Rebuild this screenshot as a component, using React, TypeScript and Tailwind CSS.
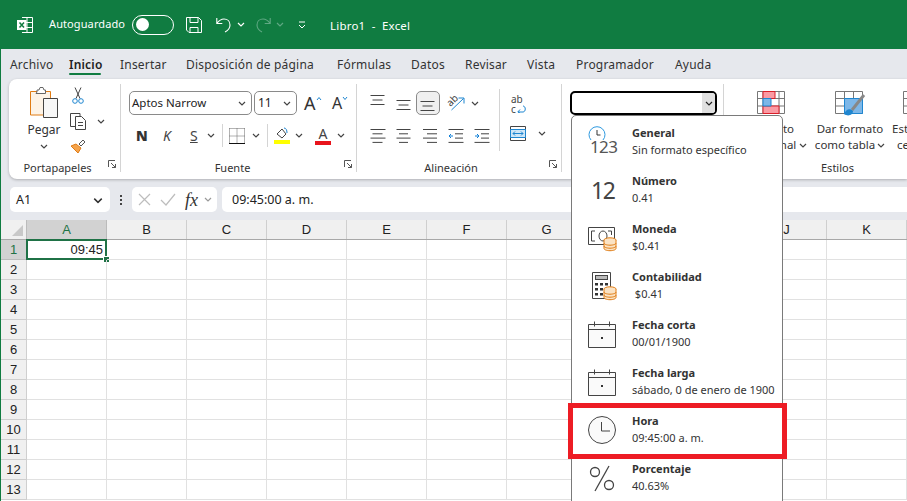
const font = "[font-family:'Noto_Sans',sans-serif]"

const tabs = [
  { name: "Archivo", w: "w-[59px]" },
  { name: "Inicio", w: "w-[51px]" },
  { name: "Insertar", w: "w-[66px]" },
  { name: "Disposición de página", w: "w-[151px]" },
  { name: "Fórmulas", w: "w-[74px]" },
  { name: "Datos", w: "w-[54px]" },
  { name: "Revisar", w: "w-[62px]" },
  { name: "Vista", w: "w-[49px]" },
  { name: "Programador", w: "w-[99px]" },
  { name: "Ayuda", w: "w-[50px]" },
]
const cols = ["A", "B", "C", "D", "E", "F", "G", "H", "I", "J", "K"]
const rows = [1, 2, 3, 4, 5, 6, 7, 8, 9, 10, 11, 12, 13]

function Chevron({ className = "", color = "#444" }: { className?: string; color?: string }) {
  return (
    <svg width="8" height="5" viewBox="0 0 8 5" className={`shrink-0 ${className}`} fill="none">
      <path d="M1 1l3 3 3-3" stroke={color} strokeWidth="1.2" />
    </svg>
  )
}

function Launcher() {
  return (
    <svg width="8" height="8" viewBox="0 0 8 8" fill="none" stroke="#555" strokeWidth="1">
      <path d="M.5 7V.5H7M3 3l4.5 4.5M7.5 4v3.5H4" />
    </svg>
  )
}

function Lines({ widths, top = 1.5, step = 4.3, blue }: { widths: number[]; top?: number; step?: number; blue?: "in" | "out" }) {
  return (
    <svg width="16" height="16" viewBox="0 0 16 16" fill="none" stroke="#444">
      {widths.map((w, i) => {
        const x = w < 0 ? 15 + w : w === 15 ? 0.5 : (15 - w) / 2
        return <path key={i} d={`M${x} ${top + i * step}h${Math.abs(w)}`} />
      })}
      {blue === "in" && <path d="M5 8H1M3 6L1 8l2 2" stroke="#0f7fd6" />}
      {blue === "out" && <path d="M1 8h4M3 6l2 2-2 2" stroke="#0f7fd6" />}
    </svg>
  )
}

function Coins() {
  return (
    <g fill="#fbe3c4" stroke="#e07c14">
      <ellipse cx="22" cy="16" rx="6" ry="2.2" />
      <path d="M16 16v8.5c0 1.2 2.7 2.2 6 2.2s6-1 6-2.2V16M16 19c0 1.2 2.7 2.2 6 2.2s6-1 6-2.2M16 22c0 1.2 2.7 2.2 6 2.2s6-1 6-2.2" />
    </g>
  )
}

function CalendarIcon() {
  return (
    <svg width="28" height="28" viewBox="0 0 28 28" fill="none" stroke="#444">
      <path d="M.5 4.500h27v23H.5zM.5 9.500h27M6.500 1.500v5M21.500 1.500v5" fill="#fafafa" />
      <rect x="13" y="17" width="2" height="2" fill="#333" stroke="none" />
    </svg>
  )
}

const formats = [
  {
    title: "General",
    sub: "Sin formato específico",
    icon: (
      <div className="relative w-[30px] h-[32px]">
        <svg width="18" height="18" viewBox="0 0 18 18" fill="none" className="absolute left-0 top-0">
          <path d="M3 14A8 8 0 1 1 15 14" stroke="#2f9ae0" strokeWidth="1" />
          <path d="M9 4v5h3.500" stroke="#333" />
        </svg>
        <span className="absolute left-[2px] top-[11px] text-[17px] leading-[20px] tracking-[-0.6px] text-[#555]">123</span>
      </div>
    ),
  },
  {
    title: "Número",
    sub: "0.41",
    icon: <span className="text-[23px] leading-[30px] text-[#444] pl-[3px] tracking-[-1.5px]">12</span>,
  },
  {
    title: "Moneda",
    sub: "$0.41",
    icon: (
      <svg width="30" height="28" viewBox="0 0 30 28" fill="none" stroke="#444">
        <path d="M.5 3.500h26v17H.5z" />
        <path d="M7 7H3.500v10H7M20 7h3.500v4M11 12a4 5 0 1 1 8 0a4 5 0 1 1-8 0" />
        <Coins />
      </svg>
    ),
  },
  {
    title: "Contabilidad",
    sub: "\u00a0$0.41",
    icon: (
      <svg width="30" height="30" viewBox="0 0 30 30" fill="none" stroke="#444">
        <path d="M4.500 1.500h18v26h-18z" fill="#fff" />
        <rect x="7.500" y="4.500" width="12" height="4" fill="#bbb" />
        <path d="M7 12h3v2.500H7zM12 12h3v2.500h-3zM17 12h3v2.500h-3zM7 17h3v2.500H7zM12 17h3v2.500h-3zM7 22h3v2.500H7zM12 22h3v2.500h-3z" fill="#333" stroke="none" />
        <g transform="translate(0 2)">
          <Coins />
        </g>
      </svg>
    ),
  },
  { title: "Fecha corta", sub: "00/01/1900", icon: <CalendarIcon /> },
  { title: "Fecha larga", sub: "sábado, 0 de enero de 1900", icon: <CalendarIcon /> },
  {
    title: "Hora",
    sub: "09:45:00 a. m.",
    icon: (
      <svg width="28" height="28" viewBox="0 0 28 28" fill="none" stroke="#444">
        <circle cx="14" cy="14" r="13.500" fill="#fafafa" />
        <path d="M13.500 6v9H22" />
      </svg>
    ),
    boxed: true,
  },
  {
    title: "Porcentaje",
    sub: "40.63%",
    icon: (
      <svg width="28" height="28" viewBox="0 0 28 28" fill="none" stroke="#444" strokeWidth="1.3">
        <circle cx="7" cy="8" r="4.500" />
        <circle cx="21" cy="21" r="4.500" />
        <path d="M21 2L7 27" />
      </svg>
    ),
  },
]

function Group({ label, width, labelPad = "", launcher, children }: { label: string; width: string; labelPad?: string; launcher?: boolean; children: React.ReactNode }) {
  return (
    <div className={`${width} shrink-0 h-[88px] flex flex-col border-r border-[#d4d4d4] my-[5px]`}>
      <div className="h-[74px] relative flex">{children}</div>
      <div className={`h-[14px] pt-[7px] flex items-center justify-center relative text-[11px] text-[#333] ${labelPad}`}>
        {label}
        {launcher && (
          <span className="absolute right-[4px] top-[2px] flex">
            <Launcher />
          </span>
        )}
      </div>
    </div>
  )
}

export default function App() {
  return (
    <div className={`${font} relative w-[907px] h-[501px] overflow-hidden flex flex-col bg-[#e6e8ed] text-[#222]`}>
      {/* barra de titulo */}
      <div className="h-[49px] shrink-0 bg-[#107c41] flex items-center pl-[17px] text-white">
        <svg width="16" height="16" viewBox="0 0 16 16" fill="none">
          <path d="M5 .5h10.500v15H5M5 5.500h10.500M5 10.500h10.500M10 .5v15" stroke="#fff" />
          <rect x="0" y="3" width="9.500" height="10" fill="#fff" />
          <path d="M2.500 5.500l4.500 5M7 5.500l-4.500 5" stroke="#107c41" strokeWidth="1.5" />
        </svg>
        <span className="ml-[16px] w-[76px] text-[11px] tracking-[0.1px] whitespace-nowrap">Autoguardado</span>
        <div className="ml-[7px] w-[42px] h-[20px] rounded-full border border-white flex items-center pl-[3px]">
          <div className="w-[13px] h-[13px] rounded-full bg-white" />
        </div>
        <svg width="16" height="16" viewBox="0 0 16 16" fill="none" stroke="#fff" className="ml-[12px]">
          <path d="M.5.500h12l3 3v12H3l-2.500-2.500zM4 .5v5h8v-5M4 15.500v-5h8v5" />
        </svg>
        <svg width="16" height="16" viewBox="0 0 16 16" fill="none" stroke="#fff" strokeWidth="1.1" className="ml-[14px]">
          <path d="M.8 1v5.500h5.500M1 6.300C3 3.500 5 2 8 2c3.500 0 6 2.500 6 6 0 3-2 5.500-5 7" />
        </svg>
        <Chevron color="#fff" className="ml-[5px]" />
        <svg width="16" height="16" viewBox="0 0 16 16" fill="none" stroke="#5fa883" strokeWidth="1.1" className="ml-[10px]">
          <path d="M15.200 1v5.500H9.700M15 6.300C13 3.500 11 2 8 2 4.500 2 2 4.500 2 8c0 3 2 5.500 5 7" />
        </svg>
        <Chevron color="#5fa883" className="ml-[5px]" />
        <svg width="8" height="8" viewBox="0 0 8 8" fill="none" stroke="#fff" className="ml-[14px]">
          <path d="M1 1h6M1 4l3 3 3-3" />
        </svg>
        <span className="ml-[24px] pt-[2px] text-[11.5px] tracking-[0.2px] whitespace-pre">Libro1  -  Excel</span>
      </div>

      {/* area principal */}
      <div className="flex-1 flex flex-col border-l border-[#107c41] min-h-0">
        <div className="h-[30px] shrink-0 flex items-center pt-[1px] pl-[9px] text-[12px] text-[#333] tracking-[0.2px] whitespace-nowrap">
          {tabs.map(t => (
            <div key={t.name} className={`relative h-full flex items-center ${t.w} ${t.name === "Inicio" ? "font-semibold text-[#222]" : ""}`}>
              {t.name}
              {t.name === "Inicio" && <span className="absolute left-0 w-[32px] bottom-[4px] h-[2px] bg-[#107c41] rounded-full" />}
            </div>
          ))}
        </div>

        {/* cinta */}
        <div className="ml-[8px] h-[100px] shrink-0 bg-white rounded-l-lg shadow-[0_1px_3px_rgba(0,0,0,0.25)] flex items-start overflow-hidden">
          <Group label="Portapapeles" width="w-[112px]" labelPad="pr-[14px]" launcher>
            <div className="w-[60px] pl-[10px] flex flex-col items-center pt-[3px]">
              <svg width="28" height="31" viewBox="0 0 28 31" fill="none">
                <path d="M.5 4.500h20V28H.5z" fill="#fdf3e6" stroke="#e07c14" />
                <path d="M7 5V3h2l1-2.500h3L14 3h1.500v3.500H6z" fill="#fff" stroke="#666" />
                <path d="M13.500 11.500h14V30.500h-14z" fill="#f7f7f7" stroke="#444" />
              </svg>
              <span className="mt-[4px] text-[12px] text-[#333] leading-[16px]">Pegar</span>
              <Chevron className="mt-[6px]" />
            </div>
            <div className="flex flex-col items-start pl-[1px] pt-[3px] gap-[9px]">
              <svg width="16" height="17" viewBox="0 0 16 17" fill="none" stroke="#444">
                <path d="M5 .5l5 11M11 .5l-5 11" />
                <circle cx="5" cy="14" r="2.300" stroke="#1f86d0" />
                <circle cx="11" cy="14" r="2.300" stroke="#1f86d0" />
              </svg>
              <div className="flex items-center">
                <svg width="16" height="17" viewBox="0 0 16 17" fill="none" stroke="#444">
                  <path d="M5 13.500H.5V.5H10V3" />
                  <path d="M5.500 3.500h6l4 4v9h-10z" fill="#fff" />
                  <path d="M8 9.500h5M8 12.500h5" />
                </svg>
                <Chevron className="ml-[11px]" />
              </div>
              <svg width="16" height="15" viewBox="0 0 16 15" fill="none">
                <path d="M9 5l4-4 2 2-4 4z" fill="#fff" stroke="#555" />
                <path d="M1 7l5-2 5 4-3 5z" fill="#f5a34b" stroke="#e07c14" />
              </svg>
            </div>
          </Group>

          <Group label="Fuente" width="w-[236px]" labelPad="pr-[12px]" launcher>
            <div className="flex flex-col pl-[8px] pt-[7px]">
              <div className="flex items-center h-[24px]">
                <div className="w-[123px] h-[24px] border border-[#8a8a8a] rounded-[5px] flex items-center justify-between pl-[2px] pr-[5px] text-[11.5px]">
                  Aptos Narrow
                  <Chevron />
                </div>
                <div className="ml-[2px] w-[43px] h-[24px] border border-[#8a8a8a] rounded-[5px] flex items-center justify-between pl-[3px] pr-[5px] text-[12px]">
                  11
                  <Chevron />
                </div>
                <span className="ml-[7px] w-[28px] flex items-start text-[18px] leading-[20px] text-[#333]">
                  A
                  <svg width="6" height="5" viewBox="0 0 6 5" fill="none" stroke="#1f86d0" className="mt-[3px]">
                    <path d="M1 4l2-2.500L5 4" />
                  </svg>
                </span>
                <span className="flex items-start text-[16px] leading-[20px] text-[#333]">
                  A
                  <svg width="6" height="5" viewBox="0 0 6 5" fill="none" stroke="#1f86d0" className="mt-[3px]">
                    <path d="M1 1l2 2.500L5 1" />
                  </svg>
                </span>
              </div>
              <div className="flex items-center h-[25px] mt-[8px] text-[14px] text-[#444]">
                <span className="ml-[7px] w-[27px] font-black text-[#333] text-[14px]">N</span>
                <span className="w-[27px] italic">K</span>
                <span className="w-[17px] underline">S</span>
                <Chevron />
                <span className="ml-[7px] h-[23px] w-px bg-[#d4d4d4]" />
                <svg width="16" height="16" viewBox="0 0 16 16" fill="none" stroke="#666" className="ml-[6px]">
                  <path d="M.5.500h15M.5 8h15M8 .500v15M.5.500v15M15.500.500v15" strokeDasharray="1 1" />
                  <path d="M0 15.500h16" stroke="#111" />
                </svg>
                <Chevron className="ml-[7px]" />
                <span className="ml-[7px] h-[23px] w-px bg-[#d4d4d4]" />
                <div className="ml-[6px] w-[16px] flex flex-col items-center">
                  <svg width="14" height="13" viewBox="0 0 14 13" fill="none" stroke="#444">
                    <path d="M2 7l5-5 4 5-4 4z" />
                    <path d="M9 1c2 0 3 2 3 5" stroke="#1f86d0" />
                  </svg>
                  <span className="w-[16px] h-[4px] bg-[#ffff00]" />
                </div>
                <Chevron className="ml-[5px]" />
                <div className="ml-[12px] w-[16px] flex flex-col items-center">
                  <span className="text-[14px] leading-[14px]">A</span>
                  <span className="w-[16px] h-[4px] bg-[#e8141c]" />
                </div>
                <Chevron className="ml-[6px]" />
              </div>
            </div>
          </Group>

          <Group label="Alineación" width="w-[205px]" labelPad="pr-[16px]" launcher>
            <div className="flex flex-col pl-[13px] pt-[7px]">
              <div className="flex items-center h-[24px] gap-[10px]">
                <Lines widths={[14, 10, 14]} top={0.5} step={4.5} />
                <Lines widths={[14, 10, 14]} top={5.5} step={4.5} />
                <div className="-ml-[6px] w-[24px] h-[24px] bg-[#f0f0f0] border border-[#8a8a8a] rounded-[5px] flex items-center justify-center">
                  <Lines widths={[14, 10, 14]} top={6.5} step={4.5} />
                </div>
                <div className="relative -ml-[4px] w-[18px] h-[20px]">
                  <span className="absolute left-0 top-[2px] -rotate-45 text-[10px] leading-[10px] text-[#444]">ab</span>
                  <svg width="14" height="14" viewBox="0 0 14 14" fill="none" stroke="#1f86d0" className="absolute left-[5px] top-[4px]">
                    <path d="M.5 13L12.500 1.500M7.500 1h5.500v5.500" />
                  </svg>
                </div>
                <Chevron className="-ml-[3px]" />
              </div>
              <div className="flex items-center h-[25px] mt-[8px] gap-[10px]">
                <Lines widths={[15, 10, 15, 10]} />
                <Lines widths={[14, 9, 14, 9]} />
                <Lines widths={[-14, -10, -14, -10]} />
                <Lines widths={[15, -8, -8, 15]} blue="in" />
                <Lines widths={[15, -8, -8, 15]} blue="out" />
              </div>
            </div>
            <div className="absolute left-[142px] top-[5px] h-[62px] w-px bg-[#d4d4d4]" />
            <div className="absolute left-[153px] top-[11px] flex flex-col">
              <div className="relative w-[17px] h-[19px] flex flex-col text-[10px] leading-[9.500px] text-[#444] ml-[1px]">
                <span>ab</span>
                <span>c</span>
                <svg width="10" height="9" viewBox="0 0 10 9" fill="none" stroke="#1f86d0" className="absolute left-[6px] top-[9px]">
                  <path d="M1 8h5c3 0 3-6 0-6M3 5.500L.8 8 3 9" />
                </svg>
              </div>
              <div className="flex items-center mt-[12px]">
                <svg width="16" height="15" viewBox="0 0 16 15" fill="none" stroke="#444">
                  <path d="M.5.500h15v14H.5z" />
                  <path d="M.5 3.500h15v8H.5z" fill="#cfe6f7" stroke="#1f86d0" />
                  <path d="M3 7.500h10M5 5.500L3 7.500l2 2M11 5.500l2 2-2 2" stroke="#1f86d0" />
                </svg>
                <Chevron className="ml-[12px]" />
              </div>
            </div>
          </Group>

          <Group label="" width="w-[162px]">
            <div className="ml-[8px] mt-[7px] w-[147px] h-[24px] border-2 border-black rounded-[5px] flex justify-end overflow-hidden">
              <div className="w-[13px] bg-[#e0e0e0] flex items-center justify-center">
                <Chevron color="#222" />
              </div>
            </div>
          </Group>

          <div className="flex-1 min-w-0 h-[88px] my-[5px] flex flex-col">
            <div className="h-[74px] flex text-[11.5px] leading-[16px] whitespace-nowrap text-[#333]">
              <div className="ml-[6px] w-[82px] shrink-0 flex flex-col items-center pt-[7px]">
                <svg width="28" height="23" viewBox="0 0 28 23" fill="none" stroke="#777">
                  <path d="M.5.500h27v22H.5zM.5 7.500h27M.5 15h27M6 .500v22M22 .500v22" />
                  <path d="M6 .500h12v7H6zM6 15h16v7.500H6z" fill="#fa9aa3" stroke="#d81e28" />
                  <path d="M6 7.500h8V15H6z" fill="#7db7e8" stroke="#1f86d0" />
                </svg>
                <span className="mt-[7px]">Formato</span>
                <span className="flex items-center gap-[3px]">
                  condicional
                  <Chevron />
                </span>
              </div>
              <div className="w-[76px] shrink-0 flex flex-col items-center pt-[7px]">
                <svg width="31" height="30" viewBox="0 0 31 30" fill="none" stroke="#777">
                  <path d="M.5.500h27v22H.5zM.5 7.500h27M.5 15h27M9.500.500v22M18.500.500v22" />
                  <path d="M9.500 7.500h18v15h-18z" fill="#7db7e8" stroke="#1f86d0" />
                  <path d="M29 4L17 19" stroke="#888" strokeWidth="3" />
                  <path d="M9 23c2-5 6-6 9-3 0 4-5 6-9 3z" fill="#1f86d0" stroke="none" />
                </svg>
                <span>Dar formato</span>
                <span className="flex items-center gap-[2px]">
                  como tabla
                  <Chevron />
                </span>
              </div>
              <div className="ml-[4px] pt-[7px] flex flex-col">
                <svg width="28" height="23" viewBox="0 0 28 23" fill="none" stroke="#777" className="ml-[11px]">
                  <path d="M.5.500h27v22H.5zM.5 7.500h27M.5 15h27" />
                </svg>
                <span className="mt-[7px]">Estilos de</span>
                <span className="pl-[5px]">celda</span>
              </div>
            </div>
            <div className="h-[14px] pt-[7px] pl-[97px] flex items-center text-[11px] text-[#333]">Estilos</div>
          </div>
        </div>

        {/* barra de formulas */}
        <div className="mt-[8px] h-[25px] shrink-0 flex items-stretch text-[12.5px]">
          <div className="ml-[9px] w-[100px] bg-white rounded-[5px] flex items-center justify-between pl-[6px] pr-[8px] pt-[1px]">
            A1
            <Chevron className="scale-125" color="#333" />
          </div>
          <div className="w-[22px] flex flex-col items-center justify-center gap-[2px]">
            <span className="w-[2px] h-[2px] bg-[#444]" />
            <span className="w-[2px] h-[2px] bg-[#444]" />
            <span className="w-[2px] h-[2px] bg-[#444]" />
          </div>
          <div className="w-[85px] bg-white rounded-[5px] flex items-center pl-[6px]">
            <svg width="13" height="13" viewBox="0 0 13 13" fill="none" stroke="#bdbdbd" strokeWidth="1.2">
              <path d="M1 1l11 11M12 1L1 12" />
            </svg>
            <svg width="16" height="13" viewBox="0 0 16 13" fill="none" stroke="#bdbdbd" strokeWidth="1.2" className="ml-[9px]">
              <path d="M1 7l5 5L15 1" />
            </svg>
            <span className="ml-[9px] w-[15px] text-[18px] leading-none italic text-[#333] [font-family:'Liberation_Serif',serif]">fx</span>
            <Chevron color="#999" className="ml-[4px]" />
          </div>
          <div className="ml-[5px] flex-1 bg-white rounded-l-[5px] flex items-center pl-[10px] pt-[1px]">09:45:00 a. m.</div>
        </div>

        {/* hoja */}
        <div className="mt-[8px] flex-1 min-h-0 bg-white overflow-hidden text-[13px] [font-family:'Liberation_Sans',sans-serif] text-[#222]">
          <div className="flex h-[20px] border-b border-[#a8a8a8]">
            <div className="relative w-[26px] shrink-0 bg-[#f0f0f0] border-r border-[#bbb]">
              <span className="absolute right-[3px] bottom-[3px] border-l-[11px] border-b-[11px] border-l-transparent border-b-[#c8c8c8]" />
            </div>
            {cols.map(c => (
              <div key={c} className={`w-[80px] shrink-0 flex items-center justify-center border-r ${c === "A" ? "bg-[#d2d2d2] text-[#1f7246] border-[#bbb]" : "bg-[#f0f0f0] border-[#cfcfcf]"}`}>
                {c}
              </div>
            ))}
          </div>
          {rows.map(r => (
            <div key={r} className="flex h-[20px]">
              <div className={`w-[26px] shrink-0 flex items-center justify-center border-b border-r ${r === 1 ? "bg-[#d2d2d2] text-[#1f7246] border-[#bbb]" : "bg-[#f0f0f0] border-[#cfcfcf]"}`}>{r}</div>
              {cols.map(c => (
                <div key={c} className="relative w-[80px] shrink-0 border-r border-b border-[#e1e1e1] flex items-center justify-end pr-[3px]">
                  {r === 1 && c === "A" && (
                    <>
                      09:45
                      <span className="absolute -left-px -top-px -right-px -bottom-px border-2 border-[#1f7246]" />
                      <span className="absolute -right-[3px] -bottom-[3px] w-[6px] h-[6px] bg-[#1f7246] border-l border-t border-white" />
                    </>
                  )}
                </div>
              ))}
            </div>
          ))}
        </div>
      </div>

      {/* menu de formatos */}
      <div className="absolute left-[571px] top-[115px] w-[212px] h-[400px] bg-white border border-[#7a7a7a] rounded-t-[5px] pt-[2px]">
        {formats.map(f => (
          <div key={f.title} className="relative h-[48px] flex items-center pl-[16px]">
            <div className="w-[44px] flex items-center">{f.icon}</div>
            <div className="flex flex-col text-[11px] leading-[17px] text-[#333] whitespace-nowrap -mt-[2px]">
              <span className="font-bold">{f.title}</span>
              <span>{f.sub}</span>
            </div>
            {f.boxed && <span className="absolute -left-[4px] -right-[5px] -top-[3px] bottom-[-5px] border-[5px] border-[#ed1c24]" />}
          </div>
        ))}
      </div>
    </div>
  )
}
